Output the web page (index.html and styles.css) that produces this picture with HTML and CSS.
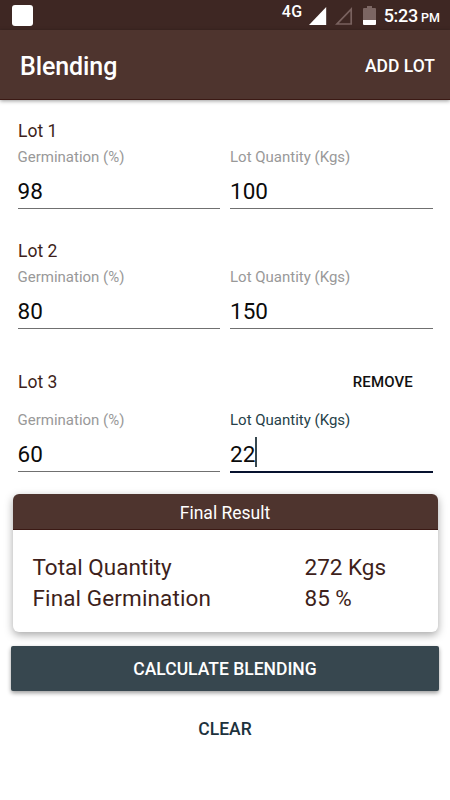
FILE: index.html
```html
<!DOCTYPE html>
<html lang="en">
<head>
<meta charset="utf-8">
<meta name="viewport" content="width=device-width, initial-scale=1">
<title>Blending</title>
<link rel="stylesheet" href="styles.css">
</head>
<body>
<div class="status">
  <span class="notice"></span>
  <div class="indicators">
    <span class="network">4G</span>
    <svg class="signal" width="18" height="18" viewBox="0 0 18 18"><path d="M17.2 0v18H0z" fill="#fff"/></svg>
    <svg class="signal-empty" width="18" height="18" viewBox="0 0 18 18"><path d="M16.2 2.2v14.8H2z" fill="none" stroke="#79625f" stroke-width="1.7"/></svg>
    <svg class="battery" width="13" height="19" viewBox="0 0 13 19"><path d="M4 0h5v2h3q1 0 1 1v11H0V3q0-1 1-1h3z" fill="#7c6663"/><path d="M0 14h13v4q0 1-1 1H1q-1 0-1-1z" fill="#fff"/></svg>
    <span class="clock">5:23 <small>PM</small></span>
  </div>
</div>
<header class="toolbar">
  <h1>Blending</h1>
  <button class="add">ADD LOT</button>
</header>
<main>
  <section class="lot">
    <div class="lot-head"><h2>Lot 1</h2></div>
    <div class="fields">
      <div class="field"><label>Germination (%)</label><div class="value">98</div></div>
      <div class="field"><label>Lot Quantity (Kgs)</label><div class="value">100</div></div>
    </div>
  </section>
  <section class="lot">
    <div class="lot-head"><h2>Lot 2</h2></div>
    <div class="fields">
      <div class="field"><label>Germination (%)</label><div class="value">80</div></div>
      <div class="field"><label>Lot Quantity (Kgs)</label><div class="value">150</div></div>
    </div>
  </section>
  <section class="lot removable">
    <div class="lot-head"><h2>Lot 3</h2><button class="remove">REMOVE</button></div>
    <div class="fields">
      <div class="field"><label>Germination (%)</label><div class="value">60</div></div>
      <div class="field focused"><label>Lot Quantity (Kgs)</label><div class="value">22<i class="caret"></i></div></div>
    </div>
  </section>
  <section class="result">
    <h3>Final Result</h3>
    <div class="totals">
      <span>Total Quantity</span><span>272 Kgs</span>
      <span class="germination">Final Germination</span><span>85 %</span>
    </div>
  </section>
  <button class="calculate">CALCULATE BLENDING</button>
  <button class="clear">CLEAR</button>
</main>
</body>
</html>
```
FILE: styles.css
```css
* { box-sizing: border-box; margin: 0; padding: 0; }
body {
  width: 450px;
  height: 800px;
  overflow: hidden;
  background: #fff;
  color: #0b0b0b;
  font-family: Roboto, "Liberation Sans", sans-serif;
}
button { border: 0; background: none; font-family: inherit; font-weight: 500; }
.status {
  display: flex;
  justify-content: space-between;
  height: 30px;
  padding: 0 10px 0 12px;
  background: #3e2723;
  color: #fff;
}
.notice { width: 21px; height: 21px; margin-top: 5px; border-radius: 3px; background: #fff; }
.indicators { display: flex; align-items: flex-start; }
.network { margin-right: 6px; font-size: 16px; font-weight: 500; line-height: 23px; letter-spacing: .4px; }
.signal { margin-top: 7px; }
.signal-empty { margin: 7px 0 0 8px; }
.battery { margin: 6px 0 0 10px; }
.clock { margin-left: 8px; font-size: 18px; font-weight: 500; line-height: 32px; letter-spacing: -.3px; white-space: nowrap; }
.clock small { margin-left: -1px; font-size: 12.5px; letter-spacing: 0; }
.toolbar {
  display: flex;
  align-items: center;
  justify-content: space-between;
  height: 70px;
  padding: 3px 15px 0 20px;
  background: #4e342e;
  border-bottom: 1px solid #3b1914;
  box-shadow: 0 1px 4px rgba(0, 0, 0, .4);
  color: #fff;
}
.toolbar h1 { padding-top: 2px; font-size: 25px; font-weight: 500; line-height: 30px; letter-spacing: -.1px; }
.add { color: #fff; font-size: 17.5px; line-height: 22px; }
main { display: flex; flex-direction: column; padding: 0 12px; }
.lot { height: 120px; padding: 20px 5px 0 6px; }
.lot-head { display: flex; align-items: center; justify-content: space-between; height: 22px; }
.lot h2 { color: #3e1f1b; font-size: 17.5px; font-weight: 400; line-height: 22px; }
.fields { display: flex; gap: 10px; margin-left: -.5px; padding-top: 5px; }
.field { width: 202.5px; }
.field label { display: block; height: 20px; color: #999; font-size: 15px; line-height: 20px; }
.value {
  display: flex;
  align-items: center;
  height: 42px;
  padding-top: 6px;
  border-bottom: 1px solid #707070;
  font-size: 22.5px;
}
.removable { height: 154px; padding-top: 30px; }
.removable .lot-head { height: 23px; }
.removable .fields { padding-top: 17px; }
.remove { margin-right: 20px; color: #111; font-size: 15px; line-height: 20px; letter-spacing: .15px; }
.focused label { color: #263f49; }
.focused .value { height: 43px; border-bottom: 2px solid #07122f; }
.caret { width: 2px; height: 30px; margin-top: -4px; background: #37474f; }
.result {
  width: 425px;
  height: 138px;
  margin-left: .5px;
  overflow: hidden;
  border-radius: 6px;
  background: #fff;
  box-shadow: 0 3px 8px rgba(0, 0, 0, .35);
}
.result h3 {
  height: 36px;
  border-bottom: 1px solid #3b1914;
  background: #4e342e;
  color: #fff;
  font-size: 17.5px;
  font-weight: 400;
  line-height: 39px;
  text-align: center;
}
.totals {
  display: grid;
  grid-template-columns: 272px 1fr;
  padding: 22px 20px;
  color: #3e1f1b;
  font-size: 22.5px;
  line-height: 31px;
}
.germination { letter-spacing: .12px; }
.calculate {
  width: 428px;
  height: 45px;
  margin: 14px 0 0 -1px;
  border-radius: 2px;
  background: #37474f;
  box-shadow: 0 2px 4px rgba(0, 0, 0, .4);
  color: #fff;
  font-size: 17.5px;
}
.clear { align-self: center; margin-top: 27px; color: #1d323d; font-size: 17.5px; line-height: 22px; }
```
